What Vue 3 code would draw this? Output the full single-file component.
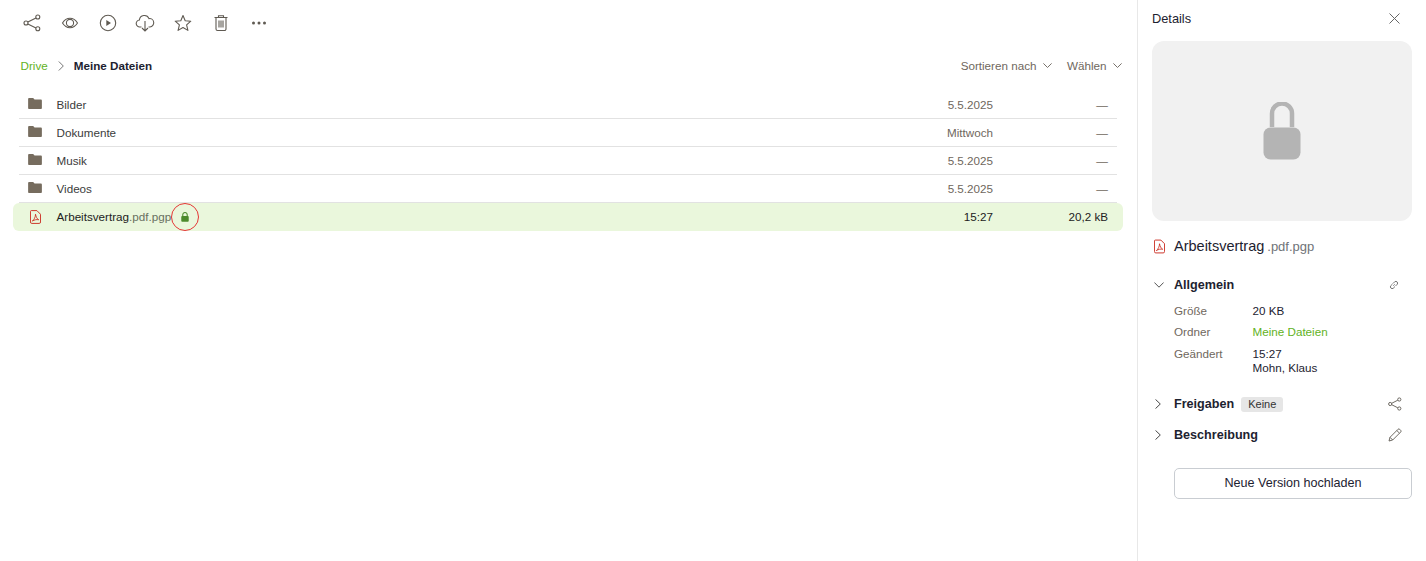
<script setup>
const folders = [
  { name: 'Bilder', date: '5.5.2025' },
  { name: 'Dokumente', date: 'Mittwoch' },
  { name: 'Musik', date: '5.5.2025' },
  { name: 'Videos', date: '5.5.2025' },
]
</script>

<template>
  <div class="page">
    <main class="main">
      <div class="toolbar">
        <button class="tool">
          <svg width="18" height="18" viewBox="0 0 18 18" fill="none" stroke="#5f5a52" stroke-width="1.1">
            <circle cx="14.800" cy="3" r="2" /><circle cx="14.800" cy="14.800" r="2" /><circle cx="3" cy="9" r="2" />
            <path d="M4.800 8.100 13 3.900M4.800 9.900 13 13.900" />
          </svg>
        </button>
        <button class="tool">
          <svg width="18" height="18" viewBox="0 0 18 18" fill="none" stroke="#5f5a52" stroke-width="1.1">
            <path d="M1.500 9C3.500 5.800 6 4.300 9 4.300s5.500 1.500 7.500 4.700c-2 3.200-4.500 4.700-7.500 4.700S3.500 12.200 1.500 9Z" />
            <circle cx="9" cy="9" r="3.600" />
          </svg>
        </button>
        <button class="tool">
          <svg width="18" height="18" viewBox="0 0 18 18" fill="none" stroke="#5f5a52" stroke-width="1.1">
            <circle cx="9" cy="9" r="7.700" />
            <path d="M7.300 5.900 12 9l-4.700 3.100Z" fill="#5f5a52" stroke="none" />
          </svg>
        </button>
        <button class="tool">
          <svg width="20" height="20" viewBox="0 0 20 20" fill="none" stroke="#5f5a52" stroke-width="1.1">
            <path d="M6.500 14H5a3.500 3.500 0 0 1-.6-7A5 5 0 0 1 14 5.600 4.200 4.200 0 0 1 15 14h-1.500" />
            <path d="M10 8v10M7 15l3 3 3-3" />
          </svg>
        </button>
        <button class="tool">
          <svg width="18" height="18" viewBox="0 0 18 18" fill="none" stroke="#5f5a52" stroke-width="1.1" stroke-linejoin="round">
            <path d="M9 1.500 11.200 6.700l5.600.5-4.200 3.700 1.300 5.500L9 13.500l-4.900 2.900 1.300-5.500L1.200 7.200l5.600-.5Z" />
          </svg>
        </button>
        <button class="tool">
          <svg width="18" height="18" viewBox="0 0 18 18" fill="none" stroke="#5f5a52" stroke-width="1.1">
            <path d="M2.500 3.500h13M6.500 3.500V1.700h5v1.800M4 3.500V15a1.500 1.500 0 0 0 1.500 1.500h7A1.500 1.500 0 0 0 14 15V3.500M7 6.500v7M9 6.500v7M11 6.500v7" />
          </svg>
        </button>
        <button class="tool">
          <svg width="16" height="4" viewBox="0 0 16 4" fill="#5f5a52">
            <circle cx="2.500" cy="2" r="1.500" /><circle cx="8" cy="2" r="1.500" /><circle cx="13.500" cy="2" r="1.500" />
          </svg>
        </button>
      </div>

      <div class="crumbbar">
        <div class="crumbs">
          <span class="crumb-link">Drive</span>
          <svg class="crumb-sep" width="6" height="10" viewBox="0 0 6 10" fill="none" stroke="#777" stroke-width="1">
            <path d="M.8.500 5.300 5 .8 9.500" />
          </svg>
          <span class="crumb-current">Meine Dateien</span>
        </div>
        <div class="actions">
          <span class="action">Sortieren nach
            <svg width="9" height="5" viewBox="0 0 9 5" fill="none" stroke="#77716a" stroke-width="1"><path d="M.4.400 4.500 4.500 8.600.400" /></svg>
          </span>
          <span class="action">Wählen
            <svg width="9" height="5" viewBox="0 0 9 5" fill="none" stroke="#77716a" stroke-width="1"><path d="M.4.400 4.500 4.500 8.600.400" /></svg>
          </span>
        </div>
      </div>

      <div class="list">
        <div v-for="f in folders" :key="f.name" class="row">
          <svg class="file-icon folder" width="14" height="11" viewBox="0 0 15 12" fill="#766c5e">
            <path d="M0 1.200C0 .500.500 0 1.200 0h3.600c.4 0 .7.100 1 .4L7 1.500h6.800c.7 0 1.200.5 1.200 1.200v8.100c0 .7-.5 1.200-1.200 1.200H1.200C.5 12 0 11.500 0 10.800Z" />
          </svg>
          <span class="name">{{ f.name }}</span>
          <span class="date">{{ f.date }}</span>
          <span class="size">—</span>
        </div>
        <div class="row selected">
          <svg class="file-icon pdf" width="11" height="14" viewBox="0 0 12 15" fill="none" stroke="#c9281c" stroke-width="1">
            <path d="M1.500.500h6l4 4v8.500a1.500 1.500 0 0 1-1.500 1.500H2A1.500 1.500 0 0 1 .5 13V1.500a1 1 0 0 1 1-1Z" />
            <path d="M6 4.500c0 3-1.500 6-3.500 7.500C5 10.500 7 10 9.500 10.500 7.500 9.500 6.500 7 6 4.500Z" stroke-width=".9" />
          </svg>
          <span class="name">Arbeitsvertrag<span class="ext">.pdf.pgp</span></span>
          <span class="lock-mark">
            <svg width="8" height="10" viewBox="0 0 9 11">
              <path d="M2 5V3a2.500 2.500 0 0 1 5 0v2" fill="none" stroke="#4d8a2d" stroke-width="1.200" />
              <rect x=".3" y="4.500" width="8.400" height="6.300" rx="1" fill="#4d8a2d" />
            </svg>
          </span>
          <span class="date strong">15:27</span>
          <span class="size strong">20,2 kB</span>
        </div>
      </div>
    </main>

    <aside class="side">
      <div class="side-head">
        <span class="side-title">Details</span>
        <svg width="11" height="11" viewBox="0 0 11 11" stroke="#666" stroke-width="1"><path d="M.5.500l10 10M10.500.500l-10 10" /></svg>
      </div>
      <div class="preview">
        <svg width="38" height="58" viewBox="0 0 38 58">
          <path d="M9 25V11.500a10 10 0 0 1 20 0V25" fill="none" stroke="#b4b4b4" stroke-width="4.500" />
          <rect x=".5" y="25.500" width="37" height="32" rx="7" fill="#b4b4b4" />
        </svg>
      </div>
      <div class="side-file">
        <svg class="side-pdf" width="11" height="15" viewBox="0 0 12 15" fill="none" stroke="#c9281c" stroke-width="1">
          <path d="M1.500.500h6l4 4v8.500a1.500 1.500 0 0 1-1.500 1.500H2A1.500 1.500 0 0 1 .5 13V1.500a1 1 0 0 1 1-1Z" />
          <path d="M6 4.500c0 3-1.500 6-3.500 7.500C5 10.500 7 10 9.500 10.500 7.500 9.500 6.500 7 6 4.500Z" stroke-width=".9" />
        </svg>
        <span class="side-name">Arbeitsvertrag</span>
        <span class="side-ext">.pdf.pgp</span>
      </div>

      <section class="general">
        <div class="sec-head">
          <svg class="chev" width="10" height="6" viewBox="0 0 10 6" fill="none" stroke="#555" stroke-width="1"><path d="M.4.500 5 5.200 9.600.500" /></svg>
          <span class="sec-title">Allgemein</span>
          <svg class="sec-icon small" width="10" height="10" viewBox="0 0 10 10" fill="none" stroke="#666" stroke-width=".9">
            <path d="M4.300 5.700 5.700 4.300M3.500 4 1.700 5.800a1.800 1.800 0 0 0 2.500 2.500L6 6.500M4 3.500l1.800-1.800a1.800 1.800 0 0 1 2.500 2.500L6.500 6" />
          </svg>
        </div>
        <dl class="props">
          <dt>Größe</dt><dd>20 KB</dd>
          <dt>Ordner</dt><dd class="link">Meine Dateien</dd>
          <dt class="changed">Geändert</dt><dd class="changed">15:27<br />Mohn, Klaus</dd>
        </dl>
      </section>

      <div class="sec-head freigaben">
        <svg class="chev right" width="6" height="10" viewBox="0 0 6 10" fill="none" stroke="#444" stroke-width="1"><path d="M.5.400 5.300 5 .5 9.600" /></svg>
        <span class="sec-title">Freigaben</span>
        <span class="badge">Keine</span>
        <svg class="sec-icon" width="14" height="14" viewBox="0 0 14 14" fill="none" stroke="#5f5a52" stroke-width=".9">
          <circle cx="11.300" cy="2.500" r="1.600" /><circle cx="11.300" cy="11.500" r="1.600" /><circle cx="2.200" cy="7" r="1.600" />
          <path d="M3.700 6.300 9.800 3.200M3.700 7.700l6.100 3.100" />
        </svg>
      </div>
      <div class="sec-head beschreibung">
        <svg class="chev right" width="6" height="10" viewBox="0 0 6 10" fill="none" stroke="#444" stroke-width="1"><path d="M.5.400 5.300 5 .5 9.600" /></svg>
        <span class="sec-title">Beschreibung</span>
        <svg class="sec-icon" width="14" height="14" viewBox="0 0 14 14" fill="none" stroke="#5f5a52" stroke-width=".9">
          <path d="M1 13 2 9.300 10 1.300a1.200 1.200 0 0 1 1.700 0l1 1a1.200 1.200 0 0 1 0 1.700l-8 8Z M2 9.300 4.700 12M8.800 2.500l2.700 2.700" />
        </svg>
      </div>

      <button class="upload">Neue Version hochladen</button>
    </aside>
  </div>
</template>

<style scoped>
.page {
  display: flex;
  height: 561px;
  font-family: "Liberation Sans", Arial, sans-serif;
  font-size: 11.660px;
  color: #1d2230;
  background: #fff;
  overflow: hidden;
}
.main {
  width: 1137px;
  flex: none;
}
.toolbar {
  display: flex;
  align-items: center;
  height: 45px;
  padding-left: 13.100px;
}
.tool {
  width: 37.800px;
  height: 38px;
  padding: 0;
  border: 0;
  background: none;
  display: flex;
  align-items: center;
  justify-content: center;
}
.crumbbar {
  display: flex;
  align-items: center;
  justify-content: space-between;
  height: 41px;
  padding: 0 15px 0 20.500px;
}
.crumbs {
  display: flex;
  align-items: center;
}
.crumb-link {
  color: #62b224;
}
.crumb-sep {
  margin: 0 10px 0 10px;
}
.crumb-current {
  font-weight: 700;
}
.actions {
  display: flex;
  gap: 15px;
  color: #6f675d;
}
.action {
  display: inline-flex;
  align-items: center;
  gap: 6.500px;
}
.list {
  margin-top: 5px;
  padding: 0 20px 0 13px;
}
.row {
  display: flex;
  align-items: center;
  height: 28px;
  margin-left: 6px;
  padding: 0 9px;
  border-bottom: 1px solid #e2e2e2;
  box-sizing: border-box;
  color: #3c3c3c;
}
.selected {
  margin: 0 -6px 0 0;
  padding: 0 15px 0 16.500px;
  border-bottom-color: transparent;
  border-radius: 6px;
  background: #eaf7dc;
  color: #222;
}
.file-icon {
  flex: none;
}
.folder {
  margin: 0 14.500px 2px 0;
}
.pdf {
  margin-right: 16px;
}
.name {
  flex: 1 1 auto;
}
.selected .name {
  flex: none;
}
.ext {
  color: #68705f;
}
.lock-mark {
  flex: none;
  width: 28px;
  height: 28px;
  margin: 0 auto 0 0;
  border: 1px solid #e53535;
  border-radius: 50%;
  display: flex;
  align-items: center;
  justify-content: center;
  box-sizing: border-box;
}
.date {
  width: 120px;
  text-align: right;
  color: #6f675d;
}
.size {
  width: 115px;
  text-align: right;
  color: #6f675d;
}
.strong {
  color: #222;
}
.side {
  flex: 1;
  border-left: 1px solid #e8e8e8;
  padding: 0 14px;
  box-sizing: border-box;
}
.side-head {
  display: flex;
  align-items: center;
  justify-content: space-between;
  height: 37px;
  padding-right: 12px;
  font-size: 12.800px;
}
.side-title {
  color: #1d2230;
}
.preview {
  height: 180px;
  margin-top: 4px;
  border-radius: 12px;
  background: #f1f1f1;
  display: flex;
  align-items: center;
  justify-content: center;
}
.side-file {
  display: flex;
  align-items: center;
  height: 50px;
}
.side-pdf {
  margin-left: 2px;
}
.side-name {
  margin-left: 9px;
  font-size: 14.500px;
}
.side-ext {
  margin-left: 3px;
  font-size: 13px;
  color: #6f7378;
}
.general {
  margin-top: 3px;
}
.sec-head {
  display: flex;
  align-items: center;
  height: 22px;
}
.chev {
  flex: none;
  margin: 0 10px 0 2px;
}
.chev.right {
  margin: 0 13px 0 3px;
}
.sec-title {
  font-size: 12.600px;
  font-weight: 700;
  color: #1d2230;
}
.sec-icon {
  margin-left: auto;
  margin-right: 10px;
}
.sec-icon.small {
  margin-right: 13px;
}
.props {
  display: grid;
  grid-template-columns: 78.500px 1fr;
  row-gap: 7px;
  margin: 8px 0 0 22px;
  line-height: 14px;
}
.props dt {
  color: #6f675d;
}
.props dd {
  margin: 0;
  color: #1d2230;
}
.props .link {
  color: #62b224;
}
.props .changed {
  margin-top: 1px;
}
.freigaben {
  margin-top: 18px;
}
.beschreibung {
  margin-top: 9px;
}
.badge {
  margin-left: 7px;
  padding: 0 7px;
  height: 15px;
  line-height: 15px;
  border-radius: 3px;
  background: #e6e6e6;
  font-size: 11px;
  color: #333;
}
.upload {
  display: block;
  width: 238px;
  height: 31px;
  margin: 22px 0 0 22px;
  padding: 0 0 2px;
  border: 1px solid #c9cdd2;
  border-radius: 5px;
  background: #fff;
  font: inherit;
  font-size: 12.600px;
  color: #1d2230;
}
</style>
